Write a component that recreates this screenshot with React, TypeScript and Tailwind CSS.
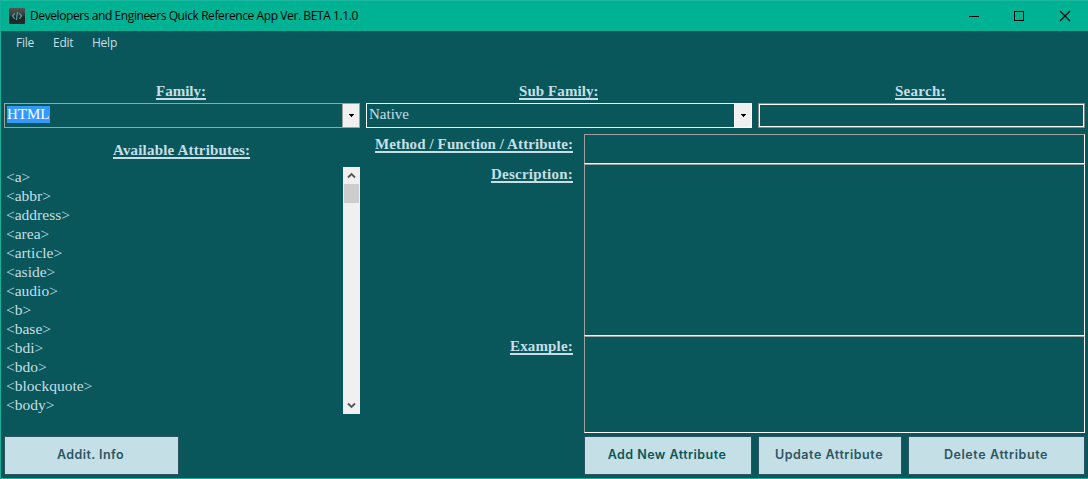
import React from "react";

const attributes = [
  "<a>", "<abbr>", "<address>", "<area>", "<article>", "<aside>", "<audio>",
  "<b>", "<base>", "<bdi>", "<bdo>", "<blockquote>", "<body>",
];

function Label({ text, className }: { text: string; className: string }) {
  return (
    <div className={"h-[18px] shrink-0 border-b-2 border-[#c5dfe6] text-[15px] leading-[19px] font-bold whitespace-nowrap " + className}>
      {text}
    </div>
  );
}

function Combo({ children, className, button }: { children: React.ReactNode; className: string; button: string }) {
  return (
    <div className={"flex h-[25px] shrink-0 border text-[15px] leading-[17px] " + className}>
      <div className="flex min-w-0 flex-1 items-start pt-[2px] pl-[2px]">{children}</div>
      <div className={"flex w-[17px] shrink-0 items-center justify-center border-l bg-[#f0f0f0] " + button}>
        <svg width="5" height="3" viewBox="0 0 5 3" shapeRendering="crispEdges">
          <path d="M0 0H5V1H4V2H3V3H2V2H1V1H0Z" fill="#000" />
        </svg>
      </div>
    </div>
  );
}

function Button({ text, className, label }: { text: string; className: string; label: string }) {
  return (
    <button className={"flex h-[39px] shrink-0 items-center justify-center border border-[#2c5564] bg-[#c5dfe6] font-['Inter',sans-serif] text-[12.5px] font-semibold whitespace-nowrap " + className}>
      <span className={label}>{text}</span>
    </button>
  );
}

export default function App() {
  return (
    <div className="flex h-[479px] w-[1088px] flex-col overflow-hidden border-b border-l border-[#18b09a] bg-[#09575b] font-['Liberation_Serif',serif] text-[#c5dfe6]">
      <header className="flex h-[31px] shrink-0 items-center border-t border-[#1cb79f] bg-[#00b294] pl-[8px] font-['Open_Sans',sans-serif] text-[12px] text-black">
        <svg width="16" height="16" viewBox="0 0 16 16">
          <defs>
            <linearGradient id="tile" x1="0" y1="0" x2="0" y2="1">
              <stop offset="0" stopColor="#555" />
              <stop offset="0.5" stopColor="#343434" />
              <stop offset="0.55" stopColor="#202020" />
              <stop offset="1" stopColor="#2b2b2b" />
            </linearGradient>
          </defs>
          <rect width="16" height="16" rx="1" fill="url(#tile)" />
          <path d="M5.7 5.2L3.5 8l2.2 2.8M10.3 5.2L12.5 8l-2.2 2.8M8.6 3.8L7.4 12.2" fill="none" stroke="#3fa3a8" strokeWidth="1.3" />
        </svg>
        <span className="ml-[5px] flex-1 text-[12px] tracking-[-0.034em] whitespace-nowrap">
          Developers and Engineers Quick Reference App Ver. BETA 1.1.0
        </span>
        <div className="flex w-[119px] shrink-0 items-center">
          <svg width="103" height="12" viewBox="0 0 103 12" shapeRendering="crispEdges" fill="none" stroke="#000">
            <path d="M0 6.5H10" />
            <rect x="45.5" y="1.5" width="9" height="9" />
            <path d="M91 1l10 10M101 1l-10 10" shapeRendering="auto" strokeWidth="1.1" />
          </svg>
        </div>
      </header>
      <nav className="flex h-[24px] shrink-0 items-center pl-[15px] font-['Open_Sans',sans-serif] text-[12px]">
        <span className="w-[37px] tracking-[-0.02em]">File</span>
        <span className="w-[39px] tracking-[-0.02em]">Edit</span>
        <span className="tracking-[-0.02em]">Help</span>
      </nav>

      <div className="mt-[27px] flex h-[18px] shrink-0 gap-[6px] pl-[3px]">
        <div className="flex w-[356px] justify-center pr-[2px]"><Label text="Family:" className="w-[50px]" /></div>
        <div className="flex w-[386px] justify-center pr-[1px]"><Label text="Sub Family:" className="w-[79px] tracking-[0.005em]" /></div>
        <div className="flex w-[327px] justify-center pr-[2px]"><Label text="Search:" className="w-[51px] tracking-[0.018em]" /></div>
      </div>
      <div className="mt-[3px] flex shrink-0 gap-[6px] pl-[3px]">
        <Combo className="w-[356px] border-[#a0a0a0]" button="border-[#a0a0a0]">
          <span className="h-[17px] w-[43px] border-r border-[#c87828] bg-[#3399ff] leading-[16px] text-white">HTML</span>
        </Combo>
        <Combo className="w-[386px] border-white" button="border-white">
          <span className="leading-[16px]">Native</span>
        </Combo>
        <div className="h-[25px] w-[327px] border border-[#84898a]">
          <div className="h-full border border-white" />
        </div>
      </div>

      <main className="flex h-[308px] shrink-0 pl-[3px]">
        <section className="flex w-[356px] flex-col">
          <div className="mt-[13px] flex justify-center pr-[1px]"><Label text="Available Attributes:" className="w-[137px] tracking-[0.012em]" /></div>
          <div className="mt-[8px] flex h-[247px]">
            <ul className="flex-1 pl-[2px] text-[15.5px] leading-[19px]">
              {attributes.map((a) => <li key={a} className="h-[19px]">{a}</li>)}
            </ul>
            <div className="flex w-[17px] flex-col items-center bg-[#f0f0f0]">
              <div className="flex h-[17px] shrink-0 items-center">
                <svg width="9" height="7" viewBox="0 0 9 7" fill="none" stroke="#555" strokeWidth="1.8"><path d="M1 5.5L4.5 2L8 5.5" /></svg>
              </div>
              <div className="h-[19px] w-[15px] shrink-0 bg-[#cdcdcd]" />
              <div className="flex-1" />
              <div className="flex h-[17px] shrink-0 items-center">
                <svg width="9" height="7" viewBox="0 0 9 7" fill="none" stroke="#555" strokeWidth="1.8"><path d="M1 1.5L4.5 5L8 1.5" /></svg>
              </div>
            </div>
          </div>
        </section>
        <section className="flex w-[213px] flex-col items-end">
          <Label text="Method / Function / Attribute:" className="mt-[7px] w-[198px] tracking-[0.007em]" />
          <Label text="Description:" className="mt-[12px] w-[82px] tracking-[0.016em]" />
          <Label text="Example:" className="mt-[154px] w-[63px] tracking-[0.01em]" />
        </section>
        <section className="ml-[11px] flex w-[501px] flex-col pt-[6px]">
          <div className="h-[30px] border border-t-[#a0a0a0] border-r-white border-b-white border-l-[#a0a0a0]" />
          <div className="h-[172px] border border-t-[#a0a0a0] border-r-white border-b-white border-l-[#a0a0a0]" />
          <div className="h-[97px] border border-t-[#a0a0a0] border-r-white border-b-white border-l-[#a0a0a0]" />
        </section>
      </main>

      <footer className="flex shrink-0 gap-[6px] pl-[3px]">
        <Button text="Addit. Info" className="mr-[399px] w-[175px] text-[#2c5564]" label="pr-[2px] tracking-[0.035em]" />
        <Button text="Add New Attribute" className="w-[168px] text-[#09575b]" label="pr-[2px] tracking-[0.037em]" />
        <Button text="Update Attribute" className="w-[144px] text-[#2c5564]" label="pr-[2px] tracking-[0.043em]" />
        <Button text="Delete Attribute" className="w-[177px] text-[#2c5564]" label="pr-[1px] tracking-[0.048em]" />
      </footer>
    </div>
  );
}
